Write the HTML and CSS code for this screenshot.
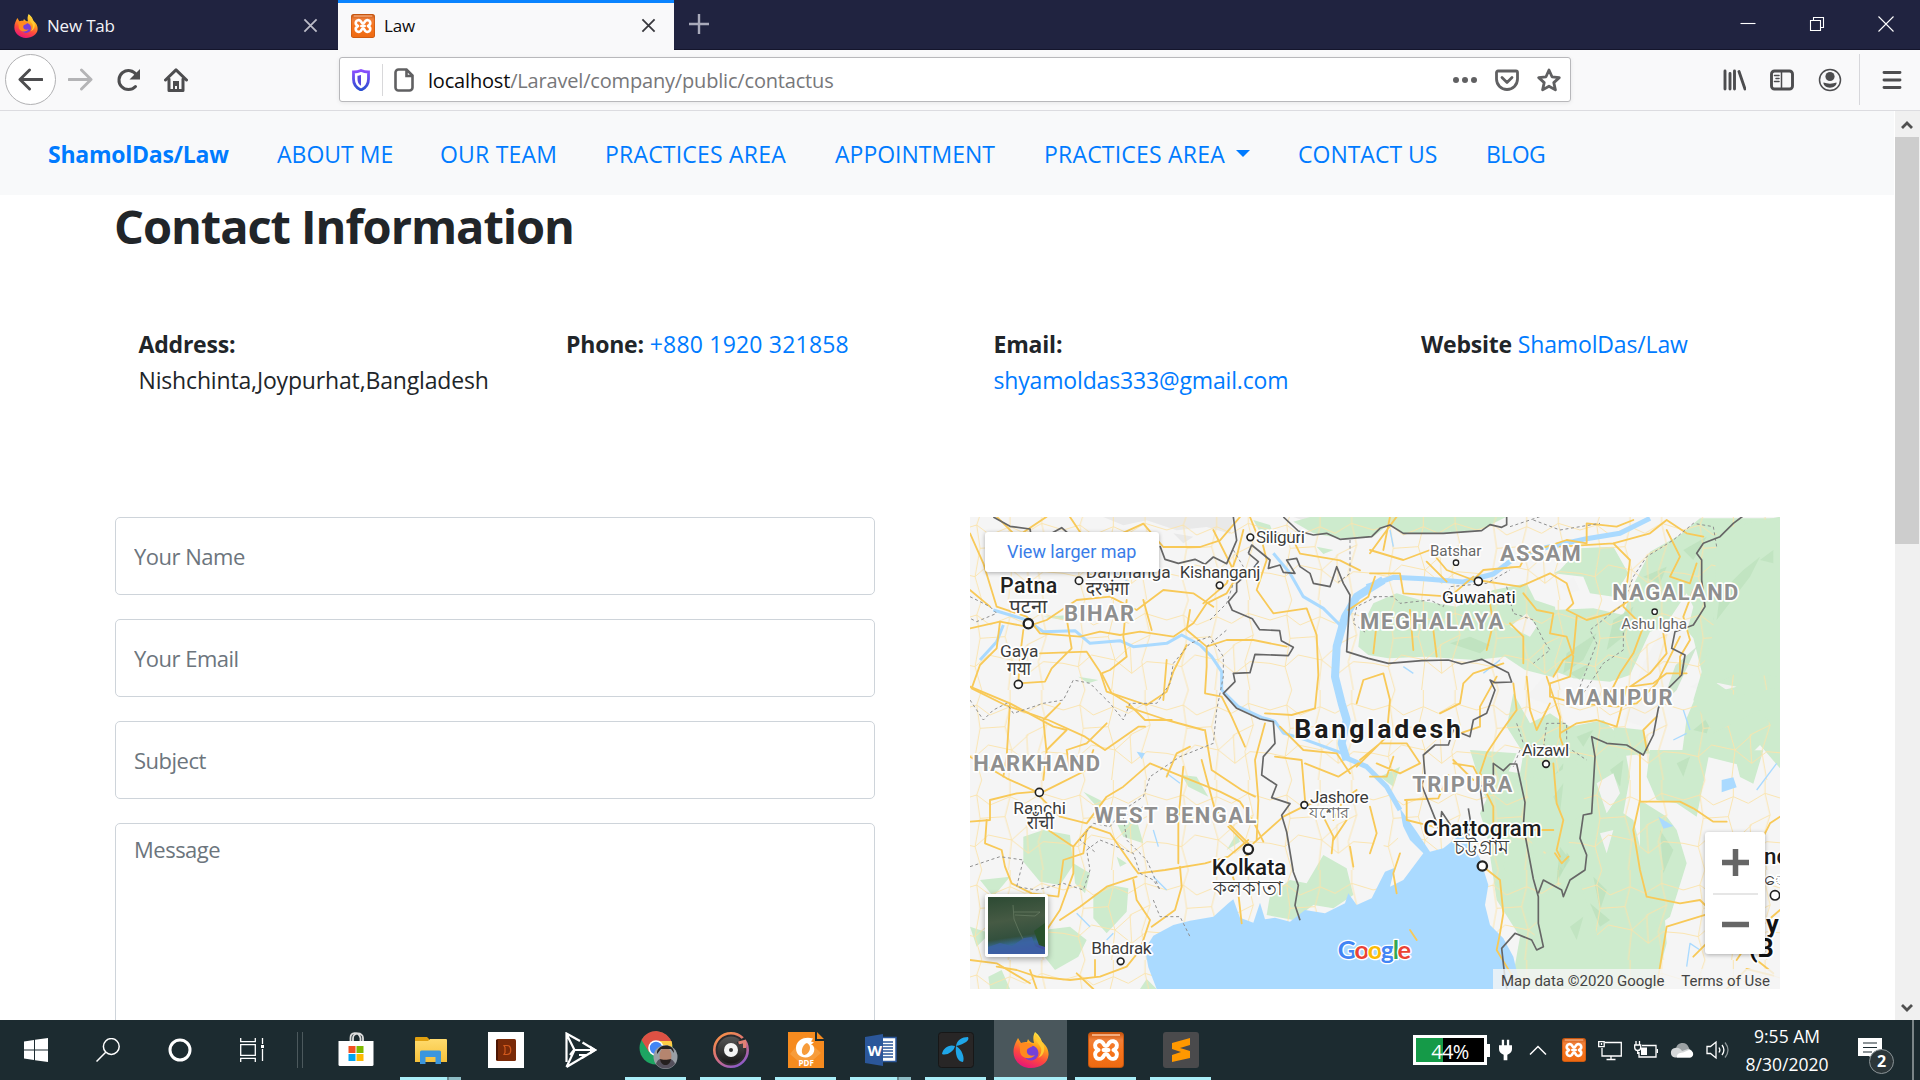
FILE: index.html
```html
<!DOCTYPE html>
<html lang="en">
<head>
<meta charset="utf-8">
<title>Law</title>
<link rel="stylesheet" href="styles.css">
</head>
<body>
<svg class="defs" aria-hidden="true">
  <defs>
    <linearGradient id="ffBody" x1="0.7" y1="0" x2="0.3" y2="1"><stop offset="0" stop-color="#fff44f"/><stop offset=".35" stop-color="#ffa21b"/><stop offset=".65" stop-color="#ff4a3d"/><stop offset="1" stop-color="#e5127c"/></linearGradient>
    <linearGradient id="xamppBg" x1="0" y1="0" x2="0" y2="1"><stop offset="0" stop-color="#c8540f"/><stop offset=".2" stop-color="#f0803a"/><stop offset=".5" stop-color="#f7751d"/><stop offset="1" stop-color="#ee6a12"/></linearGradient>
    <linearGradient id="shieldBg" x1="0" y1="0" x2="0" y2="1"><stop offset="0" stop-color="#8a4dff"/><stop offset="1" stop-color="#2a4fd0"/></linearGradient>
    <linearGradient id="ring" x1="0.2" y1="0" x2="0.8" y2="1"><stop offset="0" stop-color="#f99046"/><stop offset=".5" stop-color="#d8707c"/><stop offset="1" stop-color="#8558cf"/></linearGradient>
    <linearGradient id="disc" x1="0" y1="0" x2="0" y2="1"><stop offset="0" stop-color="#555"/><stop offset="1" stop-color="#181818"/></linearGradient>
    <linearGradient id="folderBg" x1="0" y1="0" x2="0" y2="1"><stop offset="0" stop-color="#ffdb6e"/><stop offset="1" stop-color="#f6c13a"/></linearGradient>
    <linearGradient id="sat" x1="0" y1="0" x2="0.15" y2="1"><stop offset="0" stop-color="#2c4a33"/><stop offset=".45" stop-color="#465a44"/><stop offset=".75" stop-color="#33503d"/><stop offset=".88" stop-color="#356a96"/><stop offset="1" stop-color="#4150a0"/></linearGradient>
    <symbol id="firefox" viewBox="0 0 36 36">
      <path fill="url(#ffBody)" d="M22 0c5 4 6 7 7 10 4 3 7 8 6.500 13C35 31 27 36 18 36 8 36 .5 29 .5 20 .5 14 3 10 5 6l3 5c2-1 4-1 6-1l1-3c1 2 3 4 6 4-1-4-1-7 1-11z"/>
      <circle cx="18" cy="21" r="7.500" fill="#7540d8"/>
      <path fill="#ff8a1f" d="M6 13c5-3 9-3 14 0-1 3-5 2-6 5-1 4 3 7 8 5-5 6-15 3-15-4 0-2 0-4-1-6z"/>
      <path fill="#ffc933" d="M22 1c-2 6 4 10 6 15 1 4-1 8-3 10 5-2 7-7 6-12-1-5-6-8-9-13z"/>
    </symbol>
    <symbol id="xampp" viewBox="0 0 36 36">
      <rect width="36" height="36" rx="4" fill="#c4560f"/><rect x="1" y="1" width="34" height="34" rx="3" fill="url(#xamppBg)"/>
      <path d="M4 3h28" stroke="#ffc7a0" stroke-width="1.500"/>
      <path d="M15.500 18h5M10.500 18c-3-1.500-4-4-3-6.500 1-2.500 4.500-3 6.500-1.500 2.500 2 1.500 4 4 4s1.500-2 4-4c2-1.500 5.500-1 6.500 1.500 1 2.500 0 5-3 6.500M10.500 18c-3 1.500-4 4-3 6.500 1 2.500 4.500 3 6.500 1.500 2.500-2 1.500-4 4-4s1.500 2 4 4c2 1.500 5.500 1 6.500-1.500 1-2.500 0-5-3-6.500" fill="none" stroke="#fff" stroke-width="3.900" stroke-linecap="round" stroke-linejoin="round"/>
    </symbol>
    <pattern id="lanes" width="310" height="270" patternUnits="userSpaceOnUse">
      <path d="M0 60l50-15 40 30 60-25 45 20 50-30 65 20M0 190l45 10 40-35 70 15 50 40 45-35 60 5M50 45l10 70-15 85 20 70M150 50l-15 60 20 70-10 90M150 0v50M245 40l15 65-25 80 15 85M245 0v40M65 0l-15 45M135 110l-75 5M260 105l-60 30 5 85M155 180l50-45" fill="none" stroke="#fbe3ab" stroke-width="2.800" stroke-linejoin="round"/>
    </pattern>
  </defs>
</svg>

<header class="tabbar">
  <div class="tab">
    <svg class="fav" viewBox="0 0 36 36"><use href="#firefox"/></svg>
    <span class="tab-title">New Tab</span>
    <svg class="tab-close dim" viewBox="0 0 16 16"><path d="M1.500 1.500l13 13M14.500 1.500l-13 13"/></svg>
  </div>
  <div class="tab active">
    <svg class="fav" viewBox="0 0 36 36"><use href="#xampp"/></svg>
    <span class="tab-title">Law</span>
    <svg class="tab-close" viewBox="0 0 16 16"><path d="M1.500 1.500l13 13M14.500 1.500l-13 13"/></svg>
  </div>
  <svg class="newtab" viewBox="0 0 22 22"><path d="M11 1v20M1 11h20"/></svg>
  <div class="winbtns">
    <svg viewBox="0 0 16 16"><path d="M.5 7.500h15"/></svg>
    <svg viewBox="0 0 16 16"><path d="M1.500 4.500h10v10h-10zM4.500 4.500v-3h10v10h-3"/></svg>
    <svg viewBox="0 0 16 16"><path d="M.5.5l15 15M15.500.5l-15 15"/></svg>
  </div>
</header>

<div class="toolbar">
  <div class="navbtns">
    <span class="back"><svg viewBox="0 0 26 24"><path d="M25 12H3M12 2L2 12l10 10"/></svg></span>
    <svg class="fwd" viewBox="0 0 26 24"><path d="M1 12h22M14 2l10 10-10 10"/></svg>
    <svg class="reload" viewBox="0 0 24 24"><path d="M18.500 18.500A9.500 9.500 0 1 1 19.500 7" /><path class="solid" d="M23 1v10.500H12.500z"/></svg>
    <svg class="home" viewBox="0 0 24 24"><path d="M1.500 12L12 1.800 22.500 12M5 11v11.500h14V11"/><path class="solid" d="M9 22v-9h6v9h-2v-4h-2v4z"/></svg>
  </div>
  <div class="urlbar">
    <svg class="shield" viewBox="0 0 18 22"><path d="M9 1.500c3 1.300 5 1.500 7.500 1.500v7c0 6-3 9-7.500 11-4.500-2-7.500-5-7.500-11V3C4 3 6 2.800 9 1.500z" fill="none" stroke="url(#shieldBg)" stroke-width="2.800"/><path d="M9 6c-1.500.5-2.500.7-3.500.8V10c0 3 1 5.200 3.500 6.800z" fill="#5a48e0"/></svg>
    <i class="usep"></i>
    <svg class="pageicon" viewBox="0 0 20 24"><path d="M4.500 1.500h8l6 6v12a3 3 0 0 1-3 3h-11a3 3 0 0 1-3-3v-15a3 3 0 0 1 3-3zM12.500 2v6h6" fill="none" stroke="#606062" stroke-width="2.600"/></svg>
    <span class="url"><b>localhost</b>/Laravel/company/public/contactus</span>
    <svg class="uact dots" viewBox="0 0 24 24"><circle cx="3" cy="12" r="3"/><circle cx="12" cy="12" r="3"/><circle cx="21" cy="12" r="3"/></svg>
    <svg class="uact" viewBox="0 0 24 24"><path class="line" d="M3 3h18a1.500 1.500 0 0 1 1.500 1.500V11a10.500 10.500 0 0 1-21 0V4.500A1.500 1.500 0 0 1 3 3zM7 9.500l5 5 5-5"/></svg>
    <svg class="uact" viewBox="0 0 24 24"><path class="line" d="M12 2l3 6.800 7.300.8-5.500 5 1.600 7.300L12 18.200l-6.400 3.700 1.600-7.300-5.500-5L9 8.800z"/></svg>
  </div>
  <div class="tools">
    <svg viewBox="0 0 24 24"><path d="M3 3v18M8 5.500V21M12.500 3v18M17 3.500L23 21" /></svg>
    <svg viewBox="0 0 24 24"><path d="M4.500 3h15a3 3 0 0 1 3 3v12a3 3 0 0 1-3 3h-15a3 3 0 0 1-3-3V6a3 3 0 0 1 3-3z"/><path class="thin" d="M11.500 3v18M4.500 7.500h4.500M6 10.500h3M4.500 13.500h4.500"/></svg>
    <svg viewBox="0 0 24 24"><circle class="thin" cx="12" cy="12" r="10.500"/><circle class="fill" cx="12" cy="8.500" r="4.600"/><path class="fill" d="M5.500 14.500c4 1.500 9 1.500 13 0 .5 2.500-2.500 5.200-6.500 5.200s-7-2.700-6.500-5.200z"/></svg>
    <i class="tsep"></i>
    <svg class="menu" viewBox="0 0 24 24"><path d="M4 4.500h16M4 12h16M4 19.500h16"/></svg>
  </div>
</div>

<div class="viewport">
  <main class="page">
    <nav class="nav">
      <a class="brand">ShamolDas/Law</a><a>ABOUT ME</a><a class="wide">OUR TEAM</a><a class="wide">PRACTICES AREA</a><a>APPOINTMENT</a><a class="wide">PRACTICES AREA<i class="caret"></i></a><a>CONTACT US</a><a class="tight">BLOG</a>
    </nav>
    <div class="container">
      <h2>Contact Information</h2>
      <div class="info">
        <p><b>Address:</b><br>Nishchinta,Joypurhat,Bangladesh</p>
        <p><b>Phone:</b> <a class="wide">+880 1920 321858</a></p>
        <p><b>Email:</b><br><a>shyamoldas333@gmail.com</a></p>
        <p><b>Website</b> <a>ShamolDas/Law</a></p>
      </div>
      <div class="row">
        <form class="form">
          <input placeholder="Your Name">
          <input placeholder="Your Email">
          <input placeholder="Subject">
          <textarea placeholder="Message"></textarea>
        </form>
        <div class="map">
          <svg class="map-art" viewBox="30 21 2430 1416" preserveAspectRatio="none">
            <rect x="30" y="21" width="2430" height="1416" fill="#f5f5f5"/>
            <path fill="#e9e9e9" d="M430 21l60 25 70-15 90 30 90-10 70 20 10-50zM640 70l60 10-30 20zM1000 21l60 20 90-10-10-10z"/>
            <g fill="#cdebcd">
              <path d="M1000 35l60 35 80 15 100-5 50-40 40 30 120-2 110-8 80-40V21h-590zM880 30l50 15 20 50-40-10zM1070 110l50 10-30 12z"/>
              <path d="M1200 360l40-80 70-30 90 25 90 15 110-50 100-20 25 50 60 20 10 80 60 20-10 60-70 50-80-20-60-40-90 10-150-10-110 5-60-10-30-25z"/>
              <path d="M1800 180l60-65 100-5 45 80-45 70-70-10-20-50-90-10z"/>
              <path d="M1780 300l120-5 90 20 30-90 50-100 90-50 60-50h240v750l-60-70-60 60-120-30-60 40 20-150 50-120-30-120-40-50-90 30-60 130-60 20-110-10-80-30 20-60z"/>
              <path d="M1620 780l60 10 10-60-50-80 20-100 50 90 60-30 60 40 100-20 60 60 20 110-20 110 30 20 30 120 60 110 10 140-40 150h-430l30-170-70-110-30-200-20-60z"/>
              <path d="M2040 870l80 50 30 40 30 100-50 160-40 30-50-230zM2070 720h180l-40 200-60-40-60-10-30-70zM2320 721h90l-30 100-40-20zM1960 650l90 10 20 70-100 10z"/>
              <path d="M1260 800l40 30 20-60zM1530 720l140 10-40 90-30-30-30 60zM1570 850l40-20 80 120 40 220-30 30-70-130 20-90z"/>
              <path d="M190 980l60-20 80 15 10 90-40 60-60-10-50-60zM340 1060l50 30-15 60-30-30zM400 1160l50-35 55 10-5 70-60 65-40-45zM250 1260l80-10 50 40-25 50-70 40-40-50zM470 940l60-10 20 70-60-20zM665 795l45 5 35 60-60-30zM370 845l60 30-15 20zM60 1110l90-10-50 60zM800 1020l30-50 10 25zM355 500l60 10-30 10zM30 1250l60 20-40 40zM85 1400l40-20 25 57h-60zM590 1437l-30-30-20 30zM470 1040l30 20-20 10zM250 320l80-5-20 15z"/>
              <path d="M990 1110l50 10 50-85 70 40 20 80-60 40-60-10-60 45-80-15 10-60z"/>
            </g>
            <g fill="#b9dfb9" opacity=".65">
              <path d="M1470 400l60-20 60 25-30 25zM1820 430l90-60-40 80-60 40zM1960 330l60-40-30 90-50 40zM2050 200l70-30-20 50zM2260 330l110-130 30-60-50 40-70 70zM2130 480l80-70-60 130-30 30zM1830 490l60-30-30 50zM1780 800l30-40-10 100-30 30zM1800 1000l30 40-40 80zM1720 900l30-50 20 90zM1900 1100l40 40-20 60zM2100 960l40 60-30 70zM2200 660l60-50-20 60zM2150 760l40-20-20 60zM1950 780l40-30-10 80zM1890 1180l60 50-30 20zM1850 680l50-20-30 50zM2300 230l80-60-20 40zM2170 120l70-40-40 70z"/>
            </g>
            <g fill="#f3f3f3">
              <path d="M2180 250l20 40-20 80-70 200-60 80-60-20 60-170 50-90zM1800 230l40-30 20 40-30 10zM1700 560l50-60 60 40-30 50zM2190 530l40-20 100 20-80 20zM1650 350l50-40 30 40-20 30zM1910 820l50-30 20 60-40 60zM1920 970l40-10-20 70zM1390 1170l10-20-10 50z"/>
            </g>
            <rect x="30" y="21" width="2430" height="1416" fill="url(#lanes)"/>
            <path fill="#cdebcd" d="M2270 60l190-40v480l-130-10-60 30 60 40 130-30v150l-60-80-80 40-60 30-60-100 60-200zM1700 800l60 10 90-60 30 160-40 20-30 150-60-60-20 140zM1750 1160l100-70 60 180 40 167h-250l30-200z"/>
            <path fill="#b9dfb9" opacity=".6" d="M2270 330l100-130 30-60-50 40-70 70zM2400 150l40-30v40zM1780 860l30-40-10 90zM1830 1250l40-30-20 70zM1800 1010l30 40-40 60z"/>
            <path fill="#aadaff" d="M590 1437l-25-65-10-55 25-40 60-32 50-13 70-12 45-40 15-12 20 55 40 15 20-60 15 50 30-5 45 12 45-35 60 10 60-30 10-30 25 35 45-20 40-80 50-20 5-110-10-60 50 70 40 60 40-10 50-40 30 20 30 50 25 80-10 60 15 60 40 40 30 55 30 127z"/>
            <g fill="none" stroke="#aadaff" stroke-linejoin="round">
              <path stroke-width="24" d="M1270 210l-80 50-35 60-25 90-5 90 20 80 15 50-15 70 15 50"/>
              <path stroke-width="15" d="M1220 230l80-28 90 4 120 10 90-24 60-45 100-35 120-26 100-16 90-45M1150 740l70 30 60 60 40 70"/>
              <path stroke-width="9" d="M100 300l100 30 50 35 95-3 45 38 90-8 40 18 100-10 45-25 55 30 35 35 30 45v55l50 50 70 32 40 12 25 35 65 20 110 40M940 130l50 60 40 70 60 35 50 50M60 450l50-55 20-50"/>
              <path stroke-width="4" d="M510 220l-40-30M350 1210l40 40M580 960l15 50M620 790l40 30M580 1100l40 40M440 1290l20-20M1330 470l30 20M1570 490l50-40M2180 670l-40 20M2190 660l-20-60M2220 1320l-30-20-10 70M1290 60l10 50M2450 760l-60 80"/>
            </g>
            <path fill="#aadaff" d="M2285 810l35-8 10 30-45 15zM2095 920l45 28-30 8zM530 725l25 5-10 18z"/>
            <path fill="#f5f5f5" d="M1320 930l30 60 40 40-60 80-40 20 15-60zM1250 950l30 20-20 80-20-30z"/>
            <g fill="none" stroke="#f8c958" stroke-width="5.500" stroke-linejoin="round" stroke-linecap="round">
              <path d="M30 70l40 90 40 130 90 30 40 50 120 10 60-15 60 10 60-10 100 15 60-40 40-60 60-30 30-50-40-80-30-60"/>
              <path d="M30 240l60 50M30 355l90-20 80 15 60-20 90-60 100-10 80 40 80-60 90 10 60 40M110 20l60 60 90-60M330 21l40 60-20 80 50 40 40-110 110-50 60 70h110l60-20 60-70"/>
              <path d="M120 335l-10 80-50 50-25 70 100 50 130 45 110 50 60 40 100-70 20 0M190 360l-10 80-5 80 80-5 20-40 60-60-20-120M240 430l140-5 40 60 20 60 60 20 60 20 60-40 20-60 40-80"/>
              <path d="M500 270l-10 110 10 60-50 40-25 10 30 60 50 30 50 50 80 0M550 270l25 90M690 300l-10 60 60 50 0 60-5 80 50 10 30 60 40 90M740 410l60-20 80 0 100 20"/>
              <path d="M850 60l-20 80-30 80-70 60M870 21l20 50 100 0 30 60 120 20 60 30M940 310l100-15 30 80 5 120-10 100-70 20-80-5M940 310l-50-70 30-90-20-80M1165 300l60-40 20-60"/>
              <path d="M30 530l120 50 130 70 40 10-60 60-10 90M150 580l-10 160-10 60M300 580l-50 50 10 100M500 590l120 40 110 30M440 640l-60 60-60 20 10 60M620 450l-10 120M735 660l20 120 90 60 40 20"/>
              <path d="M30 740l110 65 100 45 60-30 80-40 20-60M30 935l60-5 0-60 80-20 60-5M240 860l60 60 80 20 60-80 50-30 80-70 110 45 100 40 60 30 40 60 30 60"/>
              <path d="M80 930l-5 70 50 20 10 50 20 50 60 30 80 10 15-110 60-20 10-70M240 900l10 50 90 60 0 80-40 110-40 60M340 1010l50-60 60 20 70 100 15 20 80-10 120-20 70-20 60-50M520 1110l10 60 40 60-30 90-40 50-80 30-90 10-100-10-60-20-60-10"/>
              <path d="M530 1100l-90 30-80 60-60 40M660 1070l5 60-20 70-70 50M655 1060l0-130 15-160M620 800l30-70 40-20M725 750l40 150 100 100M865 1010l-60-60M880 1000l90-80 60-30 80-30M890 990l5-120-10-120 30-110M865 1030l-50 60 20 60 10 90"/>
              <path d="M30 1350l80 10 100 60M210 1380l20 57M350 1390l50 47M405 1400l0-50M945 740l80 10 10 120M1035 760l100 40 60-40M1090 920l30 60-5 50M1160 930l-40 60M1190 840l-40 30-30 60M960 650l70 70 100 10 40 60"/>
              <path d="M1190 580l20-70 60-20 20 80-10 110-90 90M1200 750l60-50 80 0 40 60-60 30-70-30M1230 800l50 0 20-60M1335 870l100-5 30-70M1340 870l0 60 80 20M1230 890l20 80-20 60M1440 610l60-30 10-60 30-30 90-30M1500 670l60-20 0-60 50-90"/>
              <path d="M1230 120l100 30 80-30 50 60 80 30 30-30 110-10 20-40 120-40 60 10 0-60 90 10 50-20M1230 190l90 0 10 60 140 10 70-60M1400 155l60 60M1550 210l130 20 90-40 50 30 20 60-20 20 60 30 70-20 60-40"/>
              <path d="M1690 250l40 50 50 10-10 60 50 10 20 60-10 60-60 20 0 40 80 20 120 10 60-10 60-60 40-80 30-60M1850 320l-10 110-30 20-30 50M1960 100l50 50-10 80-10 60 60 60-30 80-40 60-40 80M1800 110l160-10 110-30 50-40 60 40 50 10"/>
              <path d="M2120 60l40 80-30 60 60 20 20-60M2200 240l-30 80 20 70-30 50 0 60M2110 370l10 60-50 60-60 40 70-10 40-30 60 0M2000 530l-30 120-60-20-60 10-50 30M1760 500l40 120 0 60 20 60M1700 500l10 100 20 60 40-80"/>
              <path d="M1660 520l10 80-50 70-40 60-20 60 40 60M1480 760l60 10 60 120 0 60M1480 750l60 60M1250 340l-10 90M1350 300l10 120M1420 360l10 80M1230 130l80-110M1290 20l-20 100M1590 280l10 60-20 80M1690 460l0-80-40-40"/>
              <path d="M1780 760l10 120 20 50-20 90 10 20M1780 960l-60 0M1785 1030l20 30 20-20M1570 1070l50 40 10 100-10 60-10 50 60 100M2040 730l0 140-20 90 20 120 20 80 100 20 60-10 60 60M2040 875l120 0 40 20 60 40 40 0M2310 1170l-60 40-130 40-20 120-10 60M2390 1350l50 40M2200 1340l60-60 60-50M2060 720l-10-60 40-40"/>
              <path d="M1310 1150l-10-60 20-60M1370 1290l-20-30M1170 1010l10 60M2400 1000l30-60 30-20M2460 1200l-70 60-60 90M2300 1437l60-60 80 20"/>
            </g>
            <g fill="none" stroke="#8f8f8f" stroke-width="3" stroke-dasharray="9 8">
              <path d="M30 260l60 30 20 20-60 25-20-10M30 570l40 60 30-30 40-20 20 30 90-30 60-10 30-60 50 10 60 60 40 50 20-50 80 0 40-60 10-60 50-60 60-20 40 60 0 60-20 100-10 100-100 40-90 60-20 60-60 40-40 50-50-10-40 50 50 40"/>
              <path d="M30 1070l90-30 70 10-20 80 60 10 80-20 60 20 20-60-10-60 40-30 100 40 20 60 40 20 20 30-40-90-60-60-10-70 60-30M580 1170l20 50 60 0 30 60M740 410l60-50M750 330l50-50 20-60M820 120l30 50M1170 90l0 100-40 30M1250 260l-60 30-10 50 40 30M1240 260l60 0 20 20 90-10 40 20 20-60 110-10 70-40M1640 230l20 80 60 20 30 60 20 30-50 40M1650 50l90-30M1720 30l80 30 120-20M1990 280l30-80 40-60 80-50 60-50 60 10 10 60M1980 290l-90 70 20 40-50 130 10 20 60-90 60-40 0-60M1670 640l20 60 60 20 10-80 60 0 0 70 60 40M1680 720l-20 50"/>
            </g>
            <g fill="none" stroke="#666" stroke-width="5" stroke-linejoin="round">
              <path d="M100 21l50 28 60 8 5 28M265 75l40-22 25 22M820 21l10 70-30 70-40-20-25 22-30-15-50 12-40-12-15-40"/>
              <path d="M970 21l45 42 45 12 40-5 40 18 95-8 25-25 30-10 40 25 120 0 115-8 25-18 35 8 15-8V21"/>
              <path d="M865 130l10-25 55 45-5 25 35-10 10 22 35 3-25-40 30-5 10 25 30 20 10 30 50 10 20-60 20 50 20 35-10 170 65 20 60 15 100-8 80-2 40 12 60-14 80 40 10 28-50 2-15-8 15 30-25 70-40 20-10 50-50-20-15 45-40 0-35 30 5 60-10 30 40 100 15 40 5-60 50 75 40-25-10-60"/>
              <path d="M865 130l30 25-15 20-50 45 0 25-25 30 12 26 60 25 22 33 60 3 5 30 36 20-15 25-100-4-15 55-50 2 5 25-35 35 40 45 70 32 40 8 5 65-35 40-5 55 45 30-15 38 55 18-25 35 15 50 20 120 15 40-10 60 15 45"/>
              <path d="M1570 905l-10-75 40-20v-50l30 22 20-20 20 0 25 115-5 70 30 160 15 53v80l15 70-20 10-15-30-50-20-40 45 10 90 10 60M1735 1150l15-40 55 30 5 20 20-50 45-30 5-45-20-50 10-70 25-5 10-170-10-60 45 20 60 5 50 30 30-60 15-80 20-50 50-50 10-60-40-20 10-50 55-20 35-55-10-80 0-60-15-20 20-30 50-20 40-40 40-30"/>
            </g>
            <g fill="#fff" stroke="#222" stroke-width="5">
              <circle cx="205" cy="341" r="14" stroke-width="7"/><circle cx="175" cy="523" r="12"/><circle cx="357" cy="212" r="11"/><circle cx="871" cy="82" r="10"/><circle cx="779" cy="226" r="10"/><circle cx="1555" cy="214" r="12"/><circle cx="1488" cy="158" r="8" stroke-width="4"/><circle cx="2084" cy="305" r="8" stroke-width="4"/><circle cx="1758" cy="762" r="10"/><circle cx="238" cy="847" r="12"/><circle cx="1033" cy="885" r="10"/><circle cx="865" cy="1018" r="14" stroke-width="7"/><circle cx="482" cy="1354" r="10"/><circle cx="1567" cy="1068" r="14" stroke-width="7"/><circle cx="2445" cy="1156" r="14"/>
            </g>
            <g class="halo city">
              <text x="120" y="250" class="big" textLength="172">Patna</text><text x="148" y="310" class="native" textLength="114" lengthAdjust="spacingAndGlyphs">पटना</text>
              <text x="120" y="441" textLength="115">Gaya</text><text x="141" y="496" class="native" textLength="72" lengthAdjust="spacingAndGlyphs">गया</text>
              <text x="377" y="205" textLength="255">Darbhanga</text><text x="377" y="256" class="native" textLength="130" lengthAdjust="spacingAndGlyphs">दरभंगा</text>
              <text x="888" y="99" textLength="147">Siliguri</text><text x="659" y="203" textLength="242">Kishanganj</text>
              <text x="1410" y="137" class="soft" textLength="154">Batshar</text><text x="1446" y="278" class="dark" textLength="221">Guwahati</text>
              <text x="1984" y="357" class="soft" textLength="197">Ashu Igha</text><text x="1685" y="738" textLength="143">Aizawl</text>
              <text x="160" y="911" textLength="158">Ranchi</text><text x="200" y="958" class="native" textLength="82" lengthAdjust="spacingAndGlyphs">राँची</text>
              <text x="1050" y="878" textLength="176">Jashore</text><text x="1048" y="923" class="soft" textLength="118" lengthAdjust="spacingAndGlyphs">যশোর</text>
              <text x="755" y="1095" class="huge" textLength="224">Kolkata</text><text x="760" y="1156" class="bn" textLength="208" lengthAdjust="spacingAndGlyphs">কলকাতা</text>
              <text x="394" y="1331" textLength="181">Bhadrak</text>
              <text x="1390" y="977" class="huge" textLength="354">Chattogram</text><text x="1482" y="1033" class="bn" textLength="166" lengthAdjust="spacingAndGlyphs">চট্টগ্রাম</text>
              <text x="2412" y="1063" class="huge">nd</text><text x="2412" y="1126" class="bn">ေလး</text><text x="2418" y="1268" class="cap">y</text><text x="2366" y="1340" class="cap">(B</text>
            </g>
            <g class="halo state">
              <text x="312" y="334" textLength="210">BIHAR</text><text x="1200" y="358" textLength="430">MEGHALAYA</text><text x="1620" y="153" textLength="242">ASSAM</text><text x="1957" y="271" textLength="378">NAGALAND</text><text x="1815" y="585" textLength="323">MANIPUR</text><text x="40" y="783" textLength="380">HARKHAND</text><text x="403" y="939" textLength="486">WEST BENGAL</text><text x="1357" y="847" textLength="300">TRIPURA</text>
            </g>
            <text class="halo country" x="1003" y="684" textLength="500">Bangladesh</text>
            <text class="halo logo" x="1133" y="1347" textLength="220"><tspan fill="#4285f4">G</tspan><tspan fill="#ea4335">o</tspan><tspan fill="#fbbc05">o</tspan><tspan fill="#4285f4">g</tspan><tspan fill="#34a853">l</tspan><tspan fill="#ea4335">e</tspan></text>
          </svg>
          <a class="larger">View larger map</a>
          <svg class="satellite" viewBox="0 0 57 57"><rect width="57" height="57" fill="url(#sat)"/><path d="M25 8l1 14 5 12 4 8M26 15h26l-5 4-20-1" fill="none" stroke="#71866c" stroke-width="1" opacity=".6"/><path d="M0 50l12-4 12 3 12-8 8-1 3 9 10 4v4H0z" fill="#3c61a5" opacity=".8"/><path d="M46 34l11-8v24l-6-2z" fill="#28502c"/></svg>
          <div class="zoom"><svg viewBox="0 0 27 27"><path d="M13.500 0v27M0 13.500h27"/></svg><i></i><svg viewBox="0 0 27 27"><path d="M0 13.500h27"/></svg></div>
          <div class="credit"><span>Map data ©2020 Google</span><span>Terms of Use</span></div>
        </div>
      </div>
    </div>
  </main>
  <aside class="scroll">
    <svg viewBox="0 0 24 26"><path d="M7 17l5-5 5 5"/></svg>
    <div class="thumb"></div>
    <svg class="down" viewBox="0 0 24 26"><path d="M7 11l5 5 5-5"/></svg>
  </aside>
</div>

<footer class="taskbar">
  <div class="system">
    <svg viewBox="0 0 24 24" fill="#fff"><path d="M0 3.500l10-1.500v9.500H0zM11 1.800L24 0v11.500H11zM0 12.500h10V22L0 20.500zM11 12.500h13V24l-13-1.800z"/></svg>
    <svg viewBox="0 0 24 24" fill="none" stroke="#fff" stroke-width="1.500"><circle cx="15.300" cy="8.500" r="7.900"/><path d="M9.700 14.200L.5 23.500"/></svg>
    <svg viewBox="0 0 24 24" fill="none" stroke="#fff" stroke-width="3"><circle cx="12" cy="12" r="10"/></svg>
    <svg viewBox="0 0 24 24" fill="none" stroke="#fff" stroke-width="1.300"><path d="M.7 6.700h14.600v10.600H.7zM.7 0v3.700h14.600V0M.7 24v-3.700h14.600V24M22.500 0v6M22.500 11v12"/><path d="M21 7h3v3h-3z" fill="#fff" stroke="none"/></svg>
    <i class="grip"></i>
  </div>
  <div class="apps">
    <span class="app"><svg viewBox="0 0 36 36"><path d="M12.500 10V6c0-6 8-7 10 0v4M15 10V6c0-6 10-6 10 0v4" fill="none" stroke="#ddd" stroke-width="1.800"/><path d="M.5 9h35v23.500a1.500 1.500 0 0 1-1.500 1.500H2a1.500 1.500 0 0 1-1.500-1.500z" fill="#fff"/><path d="M10.500 14h7v7h-7z" fill="#f25022"/><path d="M18.500 14h7v7h-7z" fill="#7fba00"/><path d="M10.500 22h7v7h-7z" fill="#00a4ef"/><path d="M18.500 22h7v7h-7z" fill="#ffb900"/></svg></span>
    <span class="app run multi"><svg viewBox="0 0 36 36"><path d="M2 6a1 1 0 0 1 1-1h11l2 2v6H2z" fill="#e0a010"/><path d="M2 9h13l2-2h16a1 1 0 0 1 1 1v22H2z" fill="url(#folderBg)"/><path d="M7 32V20a1.500 1.500 0 0 1 1.500-1.500h18A1.500 1.500 0 0 1 28 20v12h-5.500v-7h-10v7z" fill="#3b96dd"/></svg></span>
    <span class="app"><svg viewBox="0 0 36 36"><path fill="#fff" d="M0 0h36v36H0z"/><rect x="8" y="7" width="20" height="22" rx="1.500" fill="#7a2a08"/><path d="M8 8h2v20H8z" fill="#4c1603"/><path d="M16 13.500h3c5 0 5 9 0 9h-3l1-2v-5z" fill="none" stroke="#d0591d" stroke-width="1.200"/></svg></span>
    <span class="app"><svg viewBox="0 0 36 36" fill="none" stroke="#fff" stroke-width="2.200"><path d="M3.500 30V1.500L17 9M19.500 10.500L32 18 19 26M3.500 35L17 27M3.500 35l8-17h18M4 3l7.500 15M7 23l4-5M16 23h7l-6 4"/><path d="M27 13.500l7 4.500-7 4.500z" fill="#fff" stroke="none"/></svg></span>
    <span class="app run"><svg class="chrome" viewBox="0 0 40 40"><circle cx="17" cy="17" r="16.500" fill="#1da462"/><path d="M2.500 9A16.500 16.500 0 0 1 33 12H17l-7 9z" fill="#dd5144"/><path d="M17 10h15.500c3 9-3 23-15.500 23.500l7-13z" fill="#ffcd46"/><circle cx="17" cy="17" r="7.800" fill="#fff"/><circle cx="17" cy="17" r="6.200" fill="#4285f4"/><circle cx="26.500" cy="26" r="12" fill="#9aa0a6"/><path d="M17 33c1-4 4-6 9-6s9 2 10 6c-5 6-14 6-19 0z" fill="#54505c"/><ellipse cx="26.500" cy="25" rx="6" ry="8.500" fill="#b5856f"/><path d="M18 23c-1-10 17-12 17-1l-3-4H22zM21 28c2 1 8 1 11 0-1 8-10 8-11 0z" fill="#25201f"/></svg></span>
    <span class="app run"><svg viewBox="0 0 36 36"><circle cx="18" cy="18" r="16.700" fill="#2b2b2e" stroke="url(#ring)" stroke-width="2.600"/><circle cx="18" cy="18" r="13.500" fill="url(#disc)"/><path d="M25 12l8-6" stroke="#20292d" stroke-width="4"/><path d="M25.500 11l6-1.500V16" stroke="#e08175" stroke-width="3" fill="none"/><circle cx="18" cy="18" r="7" fill="#f4f4f4"/><circle cx="18" cy="18" r="2" fill="#333"/></svg></span>
    <span class="app run"><svg viewBox="0 0 36 36"><path fill="#f68b1f" d="M0 0h27v9h9v27H0zM29 0l7 7h-7z"/><path fill="#f9a94f" d="M2 22L16 5l17 16-16 14z" opacity=".6"/><path fill-rule="evenodd" d="M25 6.500C15 4 8 9 8 16c0 6 4 9.500 9.500 9.500 7 0 11-7 7.500-12l-2-1 3-2-3-1zM19 11c-5 1-7 11-3 12 5 0 9-9 3-12z" fill="#fff"/><text class="pdf" x="10.500" y="33.500" textLength="15.500">PDF</text></svg></span>
    <span class="app run multi"><svg viewBox="0 0 36 36"><path fill="#fff" stroke="#2b579a" stroke-width="1.500" d="M19 5.500h14v24H19z"/><path d="M20 10h10M20 13h10M20 16h10M20 19h10M20 22h10M20 25h10" stroke="#2b579a" stroke-width="1.400"/><path fill="#2b579a" d="M2 5l18-3v32L2 31z"/><text class="word" x="4.500" y="24" textLength="12">W</text></svg></span>
    <span class="app run"><svg viewBox="0 0 36 36"><rect x=".5" y=".5" width="35" height="35" rx="3" fill="#282626" stroke="#171717"/><path d="M18 14c1-6 6-9 12-9 2 3-3 7-12 9zM17 14C11 12 5 16 4 22c4 2 12-2 13-8zM18 14c6 3 9 12 7 16-6 0-8-9-7-16z" fill="#1fa6e8"/></svg></span>
    <span class="app run current"><svg viewBox="0 0 36 36"><use href="#firefox"/></svg></span>
    <span class="app run"><svg viewBox="0 0 36 36"><use href="#xampp"/></svg></span>
    <span class="app run"><svg viewBox="0 0 36 36"><rect width="36" height="36" rx="3" fill="#4a4a4c"/><path d="M9 11l18-5v7l-10 3 10 3v7L9 30v-7l9-3-9-3z" fill="#ff9800"/></svg></span>
  </div>
  <div class="tray">
    <div class="battery"><div class="cell"><span>44%</span></div><i></i></div>
    <svg class="plug" viewBox="0 0 14 22"><path d="M3 0h2.500v6h3V0H11v6h3v4c0 3-2 5-5 6v6H5v-6c-3-1-5-3-5-6V6h3z" fill="#fff"/></svg>
    <svg class="chev" viewBox="0 0 18 12"><path d="M1 10.500l8-8 8 8" fill="none" stroke="#fff" stroke-width="1.500"/></svg>
    <svg class="ti" viewBox="0 0 36 36"><use href="#xampp"/></svg>
    <svg class="ti" viewBox="0 0 24 24" fill="none" stroke="#fff" stroke-width="1.300"><path d="M7 4.500h16.300V18H4V10M13 18v3.500M8.500 21.500h9M.7 3.700h5.500v5H.7zM3.500 5v2"/></svg>
    <svg class="ti" viewBox="0 0 24 24" fill="none" stroke="#fff" stroke-width="1.300"><path d="M8 7.500h14V19H5v-5M23.500 11v4M2 3v4M5.500 3v4M.7 7h6v2.500a3 3 0 0 1-6 0zM3.700 12v4"/><path d="M7 9.500h6v7.500H7z" fill="#fff" stroke="none"/></svg>
    <svg class="ti" viewBox="0 0 24 24"><path d="M6 11a6.500 6.500 0 0 1 12.500-2L21 14H6z" fill="#9ba1a3"/><path d="M5 19.500a4.800 4.800 0 0 1 0-9.500c3-1 6 1 7 3l6-2a4.500 4.500 0 0 1 2 8.500z" fill="#d5d8d9"/><path d="M7 19.500c-1-4 4-5 6-5l6-2.500c4 0 6 5 2 7.500z" fill="#fff"/></svg>
    <svg class="ti" viewBox="0 0 24 24" fill="none" stroke="#fff" stroke-width="1.300"><path d="M1 8.500h3.500L10 4v16l-5.500-4.500H1zM13 9.500c1.200 1.700 1.200 3.300 0 5M16 7c2.500 3.300 2.500 6.700 0 10"/><path d="M19 4.500c4 5 4 10 0 15" stroke="#8b9496"/></svg>
    <div class="clock"><span>9:55 AM</span><span>8/30/2020</span></div>
    <div class="notes"><svg viewBox="0 0 26 26"><path d="M0 0h24v18h-7v6l-6-6H0z" fill="#fff"/><path d="M5 5h14M5 9.500h14M5 14h9" stroke="#1c2b30" stroke-width="1.200"/></svg><b>2</b></div>
    <i class="peek"></i>
  </div>
</footer>
</body>
</html>
```
FILE: styles.css
```css
* { box-sizing: border-box; }
body { margin: 0; width: 1920px; height: 1080px; overflow: hidden; display: flex; flex-direction: column; font-family: "Open Sans", "Noto Sans", sans-serif; color: #212529; background: #fff; }
svg { display: block; flex: none; }
.defs { position: absolute; width: 0; height: 0; }

.tabbar { height: 50px; flex: none; display: flex; background: #202340; box-shadow: inset 0 -1px #14152c; color: #f4f4f8; }
.tab { width: 338px; display: flex; align-items: center; padding: 1px 20px 0 14px; font-size: 17px; letter-spacing: -.2px; }
.tab.active { width: 336px; padding: 0 18px 0 13px; background: #f9f9fa; color: #0c0c0d; border-top: 3px solid #0a84ff; padding-bottom: 2px; }
.fav { width: 24px; height: 24px; margin-right: 9px; }
.tab-title { flex: 1; }
.tab-close { width: 15px; height: 15px; stroke: #38383d; stroke-width: 1.900; }
.tab-close.dim { stroke: #bcbcc8; }
.newtab { width: 22px; height: 22px; margin: 13px 0 0 14px; stroke: #a9aaba; stroke-width: 2.400; }
.winbtns { margin: 16px 26px 0 auto; display: flex; gap: 53px; }
.winbtns svg { width: 16px; height: 16px; fill: none; stroke: #fff; stroke-width: 1.100; }

.toolbar { height: 61px; flex: none; display: flex; background: #f9f9fa; border-bottom: 1px solid #dcdce0; padding: 4px 0 5px 5px; align-items: center; }
.navbtns { width: 334px; display: flex; align-items: center; fill: none; stroke: #4d4d4f; stroke-width: 3; stroke-linejoin: round; stroke-linecap: round; }
.solid { fill: #4d4d4f; stroke: none; }
.back { width: 51px; height: 51px; border: 1px solid #b1b1b3; border-radius: 50%; background: #fff; display: grid; place-items: center; }
.back svg, .fwd { width: 25px; height: 23px; }
.fwd { margin-left: 12px; stroke: #b4b4b6; }
.reload { width: 24px; height: 24px; margin-left: 24px; }
.home { width: 24px; height: 24px; margin-left: 23px; }
.urlbar { width: 1232px; height: 45px; border: 1px solid #b8b8bb; border-radius: 3px; background: #fff; box-shadow: 0 1px 4px rgba(0,0,0,.08); display: flex; align-items: center; padding: 0 9px 0 12px; }
.shield { width: 18px; height: 22px; }
.usep { width: 1px; height: 32px; background: #d8d8da; margin: 0 11px 0 12px; }
.pageicon { width: 20px; height: 24px; }
.url { flex: 1; margin-left: 14px; padding-top: 2px; font-size: 20px; letter-spacing: -.18px; color: #77777a; }
.url b { font-weight: 400; color: #0c0c0d; }
.uact { width: 24px; height: 24px; margin-left: 18px; fill: #606062; }
.uact .line { fill: none; stroke: #606062; stroke-width: 2.800; stroke-linejoin: round; stroke-linecap: round; }
.tools { margin-left: auto; display: flex; align-items: center; gap: 24px; padding-right: 16px; }
.tools svg { width: 24px; height: 24px; fill: none; stroke: #4d4d4f; stroke-width: 2.900; stroke-linecap: round; }
.tools .thin { stroke-width: 1.500; }
.tools .fill { fill: #4d4d4f; stroke: none; }
.tsep { width: 1px; height: 51px; background: #d7d7db; margin-left: -7px; }
.tools .menu { margin-left: -4px; }

.viewport { height: 909px; flex: none; display: flex; overflow: hidden; }
.page { width: 1894px; height: 909px; overflow: hidden; }
a { color: #007bff; text-decoration: none; }
.nav { height: 84px; background: #f8f9fa; display: grid; grid-template-columns: 229px 163px 165px 230px 209px 254px 188px auto; align-items: center; padding: 1px 0 0 48px; font-size: 23px; white-space: nowrap; }
.brand { font-weight: 700; letter-spacing: -.25px; }
.wide { letter-spacing: .2px; }
.tight { letter-spacing: -.6px; }
.caret { display: inline-block; margin-left: 11px; vertical-align: 6px; border: 7px solid transparent; border-top-color: #007bff; border-bottom: 0; }
.container { padding: 0 114px 0 115px; }
h2 { margin: 0 0 0 -1px; height: 134px; padding-top: 1px; font-size: 47px; line-height: 60px; letter-spacing: -1.050px; font-weight: 700; }
.info { display: grid; grid-template-columns: repeat(4, 427.500px); height: 188px; padding-left: 23.500px; margin-right: -100px; font-size: 23px; line-height: 36px; letter-spacing: -.16px; white-space: nowrap; }
.info p { margin: -3px 0 0; }
.info b { letter-spacing: -.2px; }
.row { display: flex; justify-content: space-between; }
.form { width: 760px; display: flex; flex-direction: column; gap: 24px; }
.form input, .form textarea { width: 100%; height: 78px; border: 1px solid #ced4da; border-radius: 5px; padding: 0 18px; font: 22px "Open Sans", sans-serif; letter-spacing: -.5px; background: #fff; resize: none; outline: 0; }
.form textarea { height: 260px; padding-top: 10px; }
.form ::placeholder { color: #6c757d; opacity: 1; }

.map { position: relative; width: 810px; height: 472px; overflow: hidden; font-family: Roboto, sans-serif; }
.map-art { width: 810px; height: 472px; }
.halo { paint-order: stroke; stroke: #fff; stroke-width: 10px; stroke-linejoin: round; font-family: Roboto, "Noto Sans", sans-serif; }
.city { font-size: 52px; fill: #3c3c3c; }
.native { font-size: 56px; }
.big { font-size: 64px; font-weight: 500; fill: #222; }
.huge { font-size: 67px; font-weight: 500; fill: #1c1c1c; }
.bn { font-size: 60px; }
.cap { font-size: 76px; font-weight: 700; fill: #111; }
.soft { font-size: 46px; fill: #666; }
.dark { fill: #222; }
.state { font-size: 66px; font-weight: 700; fill: #8f8f8f; }
.country { font-size: 80px; font-weight: 700; fill: #1c1c1c; }
.logo { font-family: Lato, sans-serif; font-size: 76px; font-weight: 700; stroke-width: 8px; }
.larger { position: absolute; left: 15px; top: 15px; width: 174px; height: 40px; line-height: 40px; padding-left: 22px; background: #fff; border-radius: 3px; box-shadow: 0 1px 4px rgba(0,0,0,.3); font-size: 18px; color: #3a7de8; }
.satellite { position: absolute; left: 15px; top: 377px; width: 63px; height: 63px; border: 3px solid #fff; border-radius: 3px; box-shadow: 0 2px 6px rgba(0,0,0,.35); }
.zoom { position: absolute; left: 735px; top: 315px; width: 60px; height: 122px; background: #fff; border-radius: 3px; box-shadow: 0 1px 4px rgba(0,0,0,.3); display: flex; flex-direction: column; align-items: center; justify-content: space-between; padding: 17px 0 16px; }
.zoom svg { width: 27px; height: 27px; stroke: #666; stroke-width: 5.500; }
.zoom i { width: 45px; height: 2px; background: #e6e6e6; }
.credit { position: absolute; right: 0; bottom: 0; height: 20px; width: 287px; background: rgba(245,245,245,.8); display: flex; justify-content: space-between; padding: 0 10px 0 8px; font-size: 15px; line-height: 24px; color: #444; }

.scroll { width: 26px; border-left: 1px solid #fff; background: #f0f0f0; display: flex; flex-direction: column; }
.scroll svg { width: 24px; height: 26px; fill: none; stroke: #505050; stroke-width: 2.800; }
.thumb { height: 407px; width: 24px; background: #cdcdcd; }
.scroll .down { margin-top: auto; }

.taskbar { height: 60px; flex: none; background: #1c2b30; display: flex; }
.system { width: 325px; display: flex; align-items: center; gap: 48px; padding-left: 24px; }
.system svg { width: 24px; height: 24px; }
.grip { width: 6px; height: 36px; border: solid #4c595d; border-width: 0 1px; margin-left: -15px; }
.apps { display: flex; gap: 14px; }
.app { width: 61px; height: 60px; display: grid; place-items: center; }
.app svg { width: 36px; height: 36px; }
.app .chrome { width: 40px; height: 40px; transform: translate(3px, 1px); }
.run { box-shadow: inset 0 -3px #a9eef8; }
.multi { background: linear-gradient(90deg, #a9eef8 0 47px, #668b92 47px 49px, #8dbcc4 49px) bottom / 100% 3px no-repeat; box-shadow: none; }
.current { width: 73px; margin: 0 -6px; background: #4a575c; }
.pdf { font: 700 8px "Open Sans", sans-serif; fill: #fff; }
.word { font: 700 15px "Open Sans", sans-serif; fill: #fff; }
.tray { flex: 1; display: flex; align-items: center; padding-left: 202px; color: #fff; }
.battery { display: flex; align-items: center; }
.cell { width: 74px; height: 30px; border: 3px solid #fff; background: linear-gradient(90deg, #159a48 0 27px, #000 27px); font-size: 20px; line-height: 27px; text-align: center; letter-spacing: -.6px; }
.battery i { width: 3px; height: 13px; background: #fff; }
.plug { width: 13px; height: 22px; margin-left: 9px; }
.chev { width: 18px; height: 12px; margin: 0 15px 0 17px; }
.ti { width: 24px; height: 24px; margin-right: 12px; }
.clock { width: 88px; margin-left: 1px; display: flex; flex-direction: column; align-items: center; font-size: 17.500px; line-height: 28px; }
.notes { position: relative; margin: 0 0 0 27px; width: 36px; height: 36px; padding-top: 6px; }
.notes svg { width: 26px; height: 26px; }
.notes b { position: absolute; left: 11px; top: 17px; width: 25px; height: 25px; border-radius: 50%; border: 1px solid #8b9497; background: #2c3639; font-size: 16px; line-height: 23px; text-align: center; }
.peek { width: 2px; height: 60px; background: #7b8588; margin-left: auto; margin-right: 6px; }
```
